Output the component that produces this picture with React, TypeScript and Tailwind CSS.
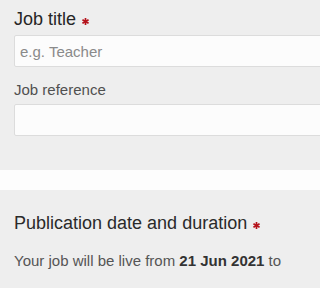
import React from 'react'

const FONT = { fontFamily: '"Liberation Sans", Arial, sans-serif' }

function Required() {
  return (
    <svg
      viewBox="0 0 8 8"
      className="ml-[6px] inline-block h-[7px] w-[7px] align-baseline"
      aria-label="required"
    >
      <g stroke="#b5121b" strokeWidth="1.9" strokeLinecap="butt">
        <line x1="4" y1="0" x2="4" y2="8" />
        <line x1="0.5" y1="2" x2="7.5" y2="6" />
        <line x1="0.5" y1="6" x2="7.5" y2="2" />
      </g>
    </svg>
  )
}

function TextInput({ placeholder }: { placeholder?: string }) {
  return (
    <input
      type="text"
      placeholder={placeholder}
      className="block h-[32px] w-[calc(100%+40px)] rounded-[2px] border border-[#dcdcdc] bg-[#fcfcfc] px-[5px] text-[15px] leading-[17px] text-[#333] placeholder:text-[#8a8a8a] outline-none"
      style={FONT}
    />
  )
}

export default function App() {
  return (
    <div className="h-screen w-full overflow-hidden bg-white" style={FONT}>
      <section className="bg-[#eeeeee] pl-[14px] pt-[9px] pb-[34px]">
        <label className="block text-[18px] leading-[20px] text-[#262626]">
          Job title
          <Required />
        </label>
        <div className="mt-[6px]">
          <TextInput placeholder="e.g. Teacher" />
        </div>

        <label className="mt-[14px] block text-[15px] leading-[17px] text-[#505050]">
          Job reference
        </label>
        <div className="mt-[6px]">
          <TextInput />
        </div>
      </section>

      <div className="h-[20px] bg-[#fdfdfd]" />

      <section className="h-full bg-[#eeeeee] pl-[14px] pt-[23px] pb-[20px]">
        <h2 className="whitespace-nowrap text-[18px] leading-[20px] font-normal text-[#2a2a2a]">
          Publication date and duration
          <Required />
        </h2>
        <p className="mt-[19px] whitespace-nowrap text-[15px] leading-[17px] text-[#555]">
          Your job will be live from <b className="font-bold text-[#333]">21 Jun 2021</b> to
        </p>
      </section>
    </div>
  )
}
